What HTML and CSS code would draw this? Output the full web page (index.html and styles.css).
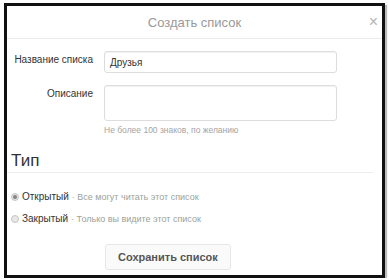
FILE: index.html
```html
<!DOCTYPE html>
<html lang="ru">
<head>
	<meta charset="UTF-8">
	<title>Создать список</title>
	<link rel="stylesheet" href="styles.css">
</head>
<body>
	<div class="dialog">
		<div class="dialog-head">
			<span></span>
			<span class="dialog-title">Создать список</span>
			<span class="close">&times;</span>
		</div>
		<form class="list-form" action="##">
			<div class="field">
				<label class="field-label">Название списка</label>
				<div class="field-box name-box">Друзья</div>
			</div>
			<div class="field field-desc">
				<label class="field-label">Описание</label>
				<div class="field-box desc-box"></div>
			</div>
			<p class="hint">Не более 100 знаков, по желанию</p>

			<h3 class="type-title">Тип</h3>
			<div class="radio-row">
				<span class="radio checked"></span>
				<span class="radio-name">Открытый</span>
				<span class="radio-desc">· Все могут читать этот список</span>
			</div>
			<div class="radio-row">
				<span class="radio"></span>
				<span class="radio-name">Закрытый</span>
				<span class="radio-desc">· Только вы видите этот список</span>
			</div>
			<div class="actions">
				<button class="save" type="submit">Сохранить список</button>
			</div>
		</form>
	</div>
</body>
</html>
```

FILE: styles.css
```css
body {
	margin: 0;
	padding: 3px 0 0 4px;
	font-family: "Liberation Sans", Arial, sans-serif;
	background: #fff;
}

.dialog {
	box-sizing: border-box;
	width: 381px;
	height: 275px;
	border: 3px solid #111;
	box-shadow: 2px 2px 1px #bbb;
	background: #fff;
}

.dialog-head {
	display: grid;
	grid-template-columns: 1fr auto 1fr;
	align-items: center;
	height: 32px;
	border-bottom: 1px solid #ebebeb;
}
.dialog-title {
	font-size: 13px;
	color: #999;
}
.close {
	justify-self: end;
	padding-right: 4px;
	font-size: 16px;
	line-height: 16px;
	color: #b4b4b4;
}

.list-form {
	margin: 0;
	padding-top: 12px;
}

.field {
	display: grid;
	grid-template-columns: 86px 233px;
	column-gap: 11px;
	align-items: start;
}
.field-desc {
	margin-top: 12px;
}
.field-label {
	padding-top: 2px;
	text-align: right;
	white-space: nowrap;
	font-size: 10px;
	line-height: 13px;
	color: #333;
}
.field-box {
	box-sizing: border-box;
	border: 1px solid #ddd;
	border-radius: 3px;
	background: #fff;
	box-shadow: inset 0 1px 1px #f2f2f2;
}
.name-box {
	height: 22px;
	padding: 0 5px;
	font-size: 10px;
	line-height: 22px;
	color: #333;
}
.desc-box {
	height: 36px;
}

.hint {
	margin: 4px 0 0 97px;
	font-size: 8.5px;
	line-height: 10px;
	color: #a4a4a4;
}

.type-title {
	margin: 16px 8px 0 0;
	padding: 0 0 1px 4px;
	font-size: 17px;
	font-weight: normal;
	line-height: 20px;
	color: #333;
	border-bottom: 1px solid #eee;
}

.radio-row {
	display: flex;
	align-items: center;
	margin-top: 8px;
	padding-left: 4px;
	font-size: 10px;
	line-height: 14px;
}
.type-title + .radio-row {
	margin-top: 17px;
}
.radio {
	box-sizing: border-box;
	width: 8px;
	height: 8px;
	margin-right: 3px;
	border: 1px solid #c4c4c4;
	border-radius: 50%;
	background: #e8e8e8;
}
.radio.checked {
	background: radial-gradient(circle, #888 0, #888 1.5px, #e4e4e4 2.5px);
}
.radio-name {
	color: #333;
}
.radio-desc {
	margin-left: 3px;
	font-size: 9px;
	color: #9aa39a;
}

.actions {
	margin-top: 18px;
	padding-left: 98px;
}
.save {
	height: 26px;
	padding: 0 12px;
	border: 1px solid #e6e6e6;
	border-radius: 3px;
	background: #fafafa;
	font-family: inherit;
	font-size: 11px;
	font-weight: bold;
	color: #555;
}
```
